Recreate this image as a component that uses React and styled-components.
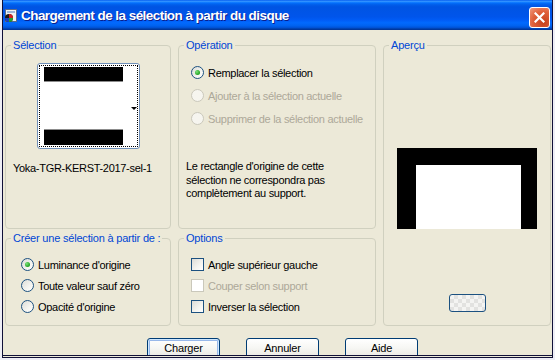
import React from "react";
import styled, { createGlobalStyle, css } from "styled-components";

const GlobalStyle = createGlobalStyle`
  html, body {
    margin: 0;
    padding: 0;
    background: #eeeef6;
  }
  body {
    font-family: "Liberation Sans", Arial, sans-serif;
    font-size: 11px;
    color: #000;
  }
  * {
    box-sizing: border-box;
  }
`;

const Window = styled.div`
  width: 551px;
  height: 358px;
  margin-left: 2px;
  border-left: 1px solid #101038;
  border-right: 1px solid #101038;
  border-bottom: 3px double #101038;
  background: #ece9d8;
  display: flex;
  flex-direction: column;
`;

const TitleBar = styled.div`
  height: 30px;
  flex: none;
  display: flex;
  align-items: center;
  padding: 1px 2px 0 1px;
  background: linear-gradient(
    180deg,
    #0058ee 0%,
    #3593ff 4%,
    #288eff 6%,
    #127dff 8%,
    #036ffc 10%,
    #0262ee 14%,
    #0057e5 20%,
    #0054e3 24%,
    #0055eb 56%,
    #005bf5 66%,
    #026afe 76%,
    #0062ef 86%,
    #0052d6 92%,
    #0040ab 96%,
    #003092 100%
  );
`;

const TitleText = styled.div`
  flex: 1;
  margin-left: 3px;
  color: #fff;
  font-family: "Liberation Sans", Arial, sans-serif;
  font-weight: bold;
  font-size: 13.5px;
  letter-spacing: -0.55px;
  text-shadow: 1px 1px 0 #0a1e8c;
  white-space: nowrap;
`;

const CloseButton = styled.div`
  width: 21px;
  height: 21px;
  margin-top: 3px;
  border: 1px solid #fff;
  border-radius: 3px;
  background: radial-gradient(circle at 70% 75%, #c6401b 0%, #e0603a 55%, #f09b7f 100%);
  display: flex;
  align-items: center;
  justify-content: center;
`;

const Body = styled.div`
  flex: 1;
  overflow: hidden;
  padding: 9px 0 0 2px;
`;

const Groups = styled.div`
  display: grid;
  grid-template-columns: 166px 198px 168px;
  grid-template-rows: 190px 94px;
  column-gap: 7px;
  row-gap: 3px;
`;

const GroupBox = styled.fieldset`
  margin: 0;
  padding: 0 5px;
  min-width: 0;
  border: 1px solid #d0d0bf;
  border-radius: 4px;
  ${(p) =>
    p.$tall &&
    css`
      grid-row: 1 / span 2;
      grid-column: 3;
      display: flex;
      flex-direction: column;
      align-items: center;
    `}
`;

const Legend = styled.legend`
  padding: 0 2px;
  color: #0046d5;
  font-size: 11px;
  line-height: 13px;
  letter-spacing: -0.2px;
`;

const Thumb = styled.div`
  width: 103px;
  height: 86px;
  margin: 11px 0 0 26px;
  padding: 1px;
  border: 1px solid #6f8fb8;
  border-radius: 3px;
  background: #fff;
`;

const FocusRing = styled.div`
  height: 100%;
  border: 1px dotted #000;
  padding: 1px 0 1px 4px;
  display: flex;
  align-items: center;
`;

const ThumbImage = styled.div`
  width: 79px;
  height: 100%;
  display: flex;
  flex-direction: column;
  background: #000;
  padding: 14px 0 15px;
`;

const ThumbWhite = styled.div`
  flex: 1;
  background: #fff;
  border-top: 1px solid #8c8c8c;
  border-bottom: 1px solid #8c8c8c;
`;

const DropArrow = styled.div`
  width: 0;
  height: 0;
  margin-left: 8px;
  margin-top: 4px;
  border-left: 3px solid transparent;
  border-right: 3px solid transparent;
  border-top: 3px solid #000;
`;

const FileName = styled.div`
  margin-top: 13px;
  padding-left: 2px;
  line-height: 13px;
  letter-spacing: -0.3px;
  white-space: nowrap;
`;

const OptionList = styled.div`
  margin-top: 9px;
  padding-left: ${(p) => p.$indent}px;
`;

const OptionRow = styled.div`
  height: ${(p) => p.$h}px;
  display: flex;
  align-items: center;
  gap: 4px;
  letter-spacing: -0.3px;
  white-space: nowrap;
  color: ${(p) => (p.$disabled ? "#aca899" : "#000")};
`;

const Radio = styled.span`
  width: 13px;
  height: 13px;
  flex: none;
  border-radius: 50%;
  border: 1px solid ${(p) => (p.$disabled ? "#cac8bb" : "#1c5180")};
  background: ${(p) =>
    p.$disabled ? "#f6f5ef" : "linear-gradient(135deg, #dcdcd7 0%, #f4f4f0 60%, #fff 100%)"};
  display: flex;
  align-items: center;
  justify-content: center;

  &::after {
    content: "";
    display: ${(p) => (p.$checked ? "block" : "none")};
    width: 5px;
    height: 5px;
    border-radius: 50%;
    background: radial-gradient(circle at 35% 35%, #7be27a 0%, #21a121 70%, #1a8a1a 100%);
  }
`;

const Checkbox = styled.span`
  width: 13px;
  height: 13px;
  flex: none;
  border: 1px solid ${(p) => (p.$disabled ? "#cac8bb" : "#1c5180")};
  background: ${(p) =>
    p.$disabled ? "#fff" : "linear-gradient(135deg, #dcdcd7 0%, #f4f4f0 60%, #fff 100%)"};
`;

const Note = styled.div`
  margin-top: 30px;
  padding-left: 2px;
  line-height: 13.5px;
  letter-spacing: -0.3px;
`;

const Preview = styled.div`
  width: 140px;
  height: 81px;
  margin-top: 96px;
  background: #000;
  padding: 17px 16px 0 19px;
  display: flex;
`;

const PreviewWhite = styled.div`
  flex: 1;
  background: #fff;
`;

const ZoomButton = styled.div`
  width: 37px;
  height: 18px;
  margin-top: 65px;
  border: 1px solid #1c5180;
  border-radius: 3px;
  background-color: #f4f4f2;
  background-image: linear-gradient(45deg, #e2e2e0 25%, transparent 25%, transparent 75%, #e2e2e0 75%),
    linear-gradient(45deg, #e2e2e0 25%, transparent 25%, transparent 75%, #e2e2e0 75%);
  background-size: 8px 8px;
  background-position: 0 0, 4px 4px;
`;

const ButtonRow = styled.div`
  display: flex;
  gap: 26px;
  margin: 12px 0 0 142px;
`;

const Button = styled.button`
  width: 73px;
  height: 23px;
  padding: 0 0 3px;
  border: 1px solid #003c74;
  border-radius: 3px;
  font-family: "Liberation Sans", Arial, sans-serif;
  font-size: 11px;
  letter-spacing: -0.2px;
  color: #000;
  background: linear-gradient(180deg, #fff 0%, #f7f7f4 40%, #ecebe6 80%, #d6d0c5 100%);
  box-shadow: ${(p) =>
    p.$default ? "inset 0 0 0 1px #cee7ff, inset 0 0 0 2px #98b8ea" : "none"};
`;

const AppIcon = () => (
  <svg width="14" height="14" viewBox="0 0 14 14">
    <rect x="1.5" y="0.5" width="11" height="12" fill="#f2f2f2" stroke="#5a6b8c" />
    <rect x="3" y="2" width="8" height="2" fill="#9fb6d8" />
    <circle cx="5" cy="9" r="4" fill="#1a1a1a" />
    <path d="M5 9 L5 5 A4 4 0 0 1 9 9 Z" fill="#d22020" />
    <path d="M5 9 L9 9 A4 4 0 0 1 5 13 Z" fill="#20a030" />
    <path d="M5 9 L5 13 A4 4 0 0 1 1 9 Z" fill="#2040c0" />
  </svg>
);

const CloseGlyph = () => (
  <svg width="11" height="11" viewBox="0 0 11 11">
    <path d="M1.5 1.5 L9.5 9.5 M9.5 1.5 L1.5 9.5" stroke="#fff" strokeWidth="2.2" strokeLinecap="square" />
  </svg>
);

const operations = [
  { label: "Remplacer la sélection", checked: true },
  { label: "Ajouter à la sélection actuelle", disabled: true },
  { label: "Supprimer de la sélection actuelle", disabled: true },
];

const sources = [
  { label: "Luminance d'origine", checked: true },
  { label: "Toute valeur sauf zéro" },
  { label: "Opacité d'origine" },
];

const options = [
  { label: "Angle supérieur gauche" },
  { label: "Couper selon support", disabled: true },
  { label: "Inverser la sélection" },
];

export default function App() {
  return (
    <>
      <GlobalStyle />
      <Window>
        <TitleBar>
          <AppIcon />
          <TitleText>Chargement de la sélection à partir du disque</TitleText>
          <CloseButton>
            <CloseGlyph />
          </CloseButton>
        </TitleBar>
        <Body>
          <Groups>
            <GroupBox>
              <Legend>Sélection</Legend>
              <Thumb>
                <FocusRing>
                  <ThumbImage>
                    <ThumbWhite />
                  </ThumbImage>
                  <DropArrow />
                </FocusRing>
              </Thumb>
              <FileName>Yoka-TGR-KERST-2017-sel-1</FileName>
            </GroupBox>

            <GroupBox>
              <Legend>Opération</Legend>
              <OptionList $indent={7}>
                {operations.map((o) => (
                  <OptionRow key={o.label} $h={23} $disabled={o.disabled}>
                    <Radio $checked={o.checked} $disabled={o.disabled} />
                    {o.label}
                  </OptionRow>
                ))}
              </OptionList>
              <Note>
                Le rectangle d'origine de cette
                <br />
                sélection ne correspondra pas
                <br />
                complètement au support.
              </Note>
            </GroupBox>

            <GroupBox $tall>
              <Legend>Aperçu</Legend>
              <Preview>
                <PreviewWhite />
              </Preview>
              <ZoomButton />
            </GroupBox>

            <GroupBox>
              <Legend>Créer une sélection à partir de :</Legend>
              <OptionList $indent={10}>
                {sources.map((o) => (
                  <OptionRow key={o.label} $h={21}>
                    <Radio $checked={o.checked} />
                    {o.label}
                  </OptionRow>
                ))}
              </OptionList>
            </GroupBox>

            <GroupBox>
              <Legend>Options</Legend>
              <OptionList $indent={7}>
                {options.map((o) => (
                  <OptionRow key={o.label} $h={21} $disabled={o.disabled}>
                    <Checkbox $disabled={o.disabled} />
                    {o.label}
                  </OptionRow>
                ))}
              </OptionList>
            </GroupBox>
          </Groups>
          <ButtonRow>
            <Button $default>Charger</Button>
            <Button>Annuler</Button>
            <Button>Aide</Button>
          </ButtonRow>
        </Body>
      </Window>
    </>
  );
}
